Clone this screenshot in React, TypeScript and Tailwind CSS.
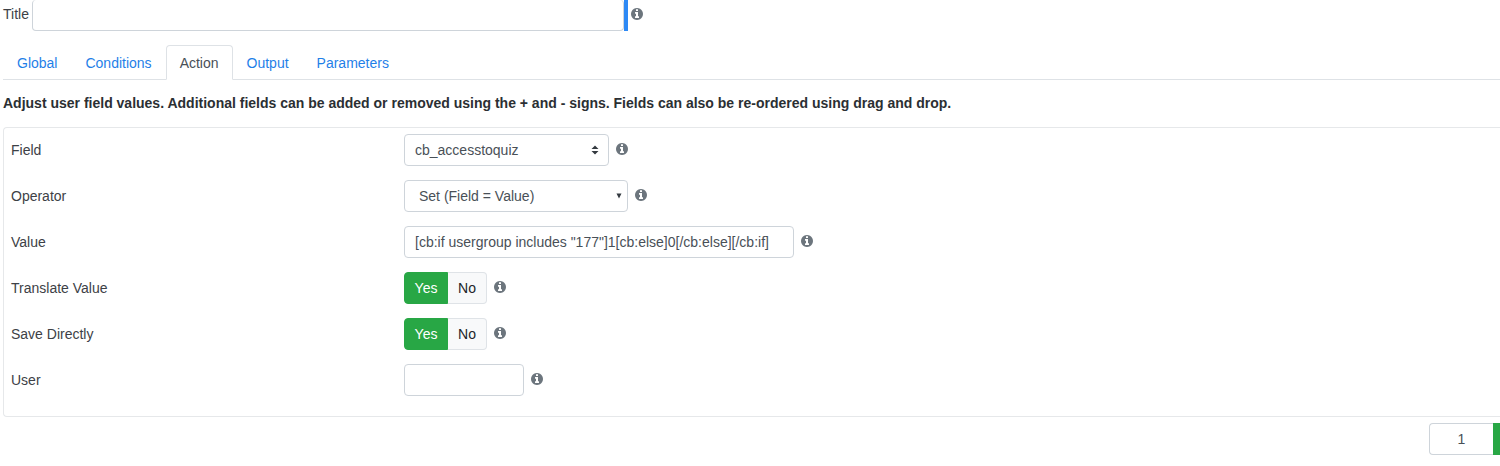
import { useState } from 'react'
import type { ReactNode } from 'react'
import { clsx } from 'clsx'

const TABS = ['Global', 'Conditions', 'Action', 'Output', 'Parameters']

const CONTROL = 'h-8 rounded border border-[#ced4da] bg-white text-[#495057] focus:outline-none'

function InfoButton({ label }: { label: string }) {
  return (
    <button type="button" aria-label={`About ${label}`} className="shrink-0 pb-[2px] text-[#6c757d]">
      <svg viewBox="128 128 1536 1536" fill="currentColor" aria-hidden="true" className="block h-3 w-3">
        <path d="M1152 1376v-160q0-14-9-23t-23-9h-96v-512q0-14-9-23t-23-9h-320q-14 0-23 9t-9 23v160q0 14 9 23t23 9h96v320h-96q-14 0-23 9t-9 23v160q0 14 9 23t23 9h448q14 0 23-9t9-23zm-128-896v-160q0-14-9-23t-23-9h-192q-14 0-23 9t-9 23v160q0 14 9 23t23 9h192q14 0 23-9t9-23zm640 416q0 209-103 385.5t-279.5 279.5-385.5 103-385.5-103-279.5-279.5-103-385.5 103-385.5 279.5-279.5 385.5-103 385.5 103 279.5 279.5 103 385.5z" />
      </svg>
    </button>
  )
}

function FieldRow({ id, label, children }: { id: string; label: string; children: ReactNode }) {
  return (
    <div className="flex items-center">
      <label id={`${id}-label`} htmlFor={id} className="w-[393px] shrink-0">
        {label}
      </label>
      <div className="flex items-center gap-[7px]">{children}</div>
    </div>
  )
}

function YesNo({ id, value, onChange }: { id: string; value: boolean; onChange: (v: boolean) => void }) {
  return (
    <div role="group" aria-labelledby={`${id}-label`} className="flex h-8">
      <button
        type="button"
        id={id}
        aria-pressed={value}
        onClick={() => onChange(true)}
        className={clsx(
          'w-11 rounded-l border',
          value ? 'border-[#28a745] bg-[#28a745] text-white' : 'border-[#dfe3e7] bg-[#f8f9fa] text-[#212529]'
        )}
      >
        Yes
      </button>
      <button
        type="button"
        aria-pressed={!value}
        onClick={() => onChange(false)}
        className={clsx(
          'w-[39px] rounded-r border border-l-0',
          value ? 'border-[#dfe3e7] bg-[#f8f9fa] text-[#212529]' : 'border-[#dc3545] bg-[#dc3545] text-white'
        )}
      >
        No
      </button>
    </div>
  )
}

export default function App() {
  const [tab, setTab] = useState('Action')
  const [translate, setTranslate] = useState(true)
  const [direct, setDirect] = useState(true)

  return (
    <main className="overflow-x-hidden bg-white pl-[3px] font-['Liberation_Sans',Arial,sans-serif] text-[14px] leading-5 text-[#3d4146]">
      <div className="flex items-center">
        <label htmlFor="title" className="w-[29px] shrink-0 pb-[3px]">
          Title
        </label>
        <div className="flex border-r-4 border-[#2d89f5]">
          <input
            id="title"
            type="text"
            className="h-[31px] w-[592px] rounded border border-t-0 border-[#ced4da] px-[10px] focus:outline-none"
          />
        </div>
        <div className="ml-[3px] flex pb-px">
          <InfoButton label="Title" />
        </div>
      </div>

      <div role="tablist" className="mt-[14px] flex border-b border-[#dee2e6]">
        {TABS.map((name) => (
          <button
            key={name}
            type="button"
            role="tab"
            aria-selected={tab === name}
            onClick={() => setTab(name)}
            className={clsx(
              '-mb-px h-[35px] rounded-t border px-[13px]',
              tab === name
                ? 'border-[#dee2e6] border-b-white bg-white text-[#495057]'
                : 'border-transparent text-[#1f7fe8]'
            )}
          >
            {name}
          </button>
        ))}
      </div>

      <p className="mt-[13px] font-bold text-[#2b2f33]">
        Adjust user field values. Additional fields can be added or removed using the + and - signs. Fields can also be
        re-ordered using drag and drop.
      </p>

      <section className="mt-[14px] flex flex-col gap-[14px] rounded-l border border-r-0 border-[#e6e8ea] px-[7px] pt-[6px] pb-5">
        <FieldRow id="field" label="Field">
          <div className="relative">
            <select id="field" className={clsx(CONTROL, 'w-[205px] appearance-none px-[10px]')}>
              <option>cb_accesstoquiz</option>
            </select>
            <svg
              viewBox="0 0 8 10"
              aria-hidden="true"
              className="pointer-events-none absolute top-[11px] right-[10px] h-[10px] w-2 fill-[#343a40]"
            >
              <path d="M4 0.5 7.5 4h-7zM4 9.5 0.5 6h7z" />
            </svg>
          </div>
          <InfoButton label="Field" />
        </FieldRow>

        <FieldRow id="operator" label="Operator">
          <div className="relative">
            <select id="operator" className={clsx(CONTROL, 'w-[224px] appearance-none px-[14px]')}>
              <option>Set (Field = Value)</option>
            </select>
            <svg
              viewBox="0 0 6 6"
              aria-hidden="true"
              className="pointer-events-none absolute top-[13px] right-[6px] h-[6px] w-[6px] fill-[#343a40]"
            >
              <path d="M0.5 0.5h5L3 5.5z" />
            </svg>
          </div>
          <InfoButton label="Operator" />
        </FieldRow>

        <FieldRow id="value" label="Value">
          <input
            id="value"
            type="text"
            defaultValue={'[cb:if usergroup includes "177"]1[cb:else]0[/cb:else][/cb:if]'}
            className={clsx(CONTROL, 'w-[390px] px-[10px]')}
          />
          <InfoButton label="Value" />
        </FieldRow>

        <FieldRow id="translate" label="Translate Value">
          <YesNo id="translate" value={translate} onChange={setTranslate} />
          <InfoButton label="Translate Value" />
        </FieldRow>

        <FieldRow id="direct" label="Save Directly">
          <YesNo id="direct" value={direct} onChange={setDirect} />
          <InfoButton label="Save Directly" />
        </FieldRow>

        <FieldRow id="user" label="User">
          <input id="user" type="text" className={clsx(CONTROL, 'w-[120px] px-[10px]')} />
          <InfoButton label="User" />
        </FieldRow>
      </section>

      <div className="mt-[6px] flex justify-end">
        <input
          type="text"
          aria-label="Number of fields"
          defaultValue="1"
          className="h-8 w-16 rounded-l border border-r-0 border-[#ced4da] text-center text-[#495057] focus:outline-none"
        />
        <button type="button" aria-label="Add field" className="h-8 w-[7px] bg-[#28a745]" />
      </div>
    </main>
  )
}
